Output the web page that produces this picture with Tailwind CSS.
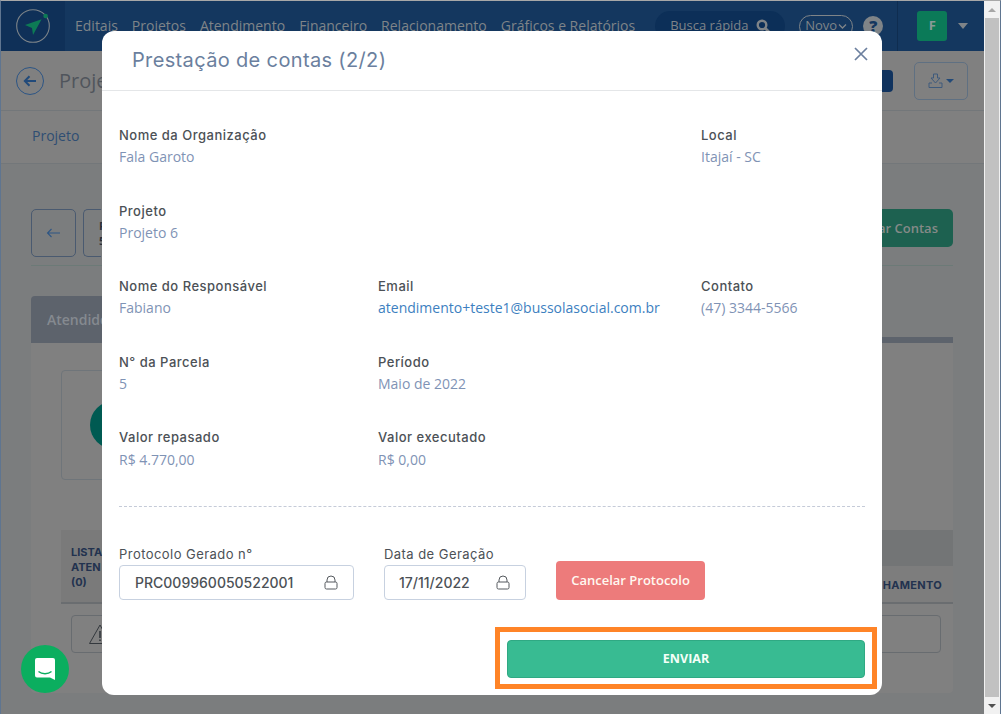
<!DOCTYPE html>
<html lang="pt-BR">
<head>
    <meta charset="UTF-8">
    <title>Prestação de contas</title>
    <script src="https://cdn.jsdelivr.net/npm/@tailwindcss/browser@4"></script>
</head>
<body class="bg-[#7b7d7e]">
<div class="relative w-[1001px] h-[714px] overflow-hidden bg-[#7b7d7e] font-['Open_Sans',sans-serif] border-t border-l border-r border-t-[#a8a8a8] border-l-[#5f7590] border-r-[#5f7590]">

    <!-- page behind the modal -->
    <div class="w-[983px] h-[713px] flex flex-col">
        <header class="h-[50px] shrink-0 bg-[#14375f] flex items-center text-[14px] text-[#7f8488]">
            <div class="w-[64px] h-[50px] bg-[#0f3058] flex items-center justify-center">
                <svg width="36" height="36" viewBox="0 0 36 36" fill="none">
                    <circle cx="18" cy="18" r="16.3" stroke="#7d8489" stroke-width="1.1"/>
                    <circle cx="30.6" cy="8" r="2.3" fill="#0d7a55"/>
                    <path d="M10 17 L26.6 11.3 L18 27 L17 20 Z" fill="#0d7a55"/>
                </svg>
            </div>
            <nav class="flex items-center gap-[14px] ml-[10px] pb-[1px]">
                <span>Editais</span><span>Projetos</span><span>Atendimento</span><span>Financeiro</span><span>Relacionamento</span><span>Gráficos e Relatórios</span>
            </nav>
            <div class="ml-[20px] w-[130px] h-[30px] rounded-full bg-[#0c2f58] flex items-center justify-between pl-[15px] pr-[14px] text-[13px]">
                <span>Busca rápida</span>
                <svg width="15" height="15" viewBox="0 0 15 15" fill="none"><circle cx="6" cy="6" r="4.3" stroke="#7f8488" stroke-width="2.4"/><path d="M9.5 9.5 L13.5 13.5" stroke="#7f8488" stroke-width="2.6"/></svg>
            </div>
            <div class="ml-[14px] w-[54px] h-[23px] rounded-full border border-[#7f8488] flex items-center justify-center gap-[1px] text-[13px]">
                <span>Novo</span>
                <svg width="9" height="7" viewBox="0 0 9 7" fill="none"><path d="M1 1.5 L4.5 5 L8 1.5" stroke="#7f8488" stroke-width="1.3"/></svg>
            </div>
            <div class="ml-[10px] w-[20px] h-[20px] rounded-full bg-[#7f8488] flex items-center justify-center text-[16px] font-extrabold text-[#14375f]">?</div>
            <div class="ml-[14px] h-[50px] border-l border-[#0f2d50] pl-[19px] flex items-center">
                <div class="w-[30px] h-[30px] rounded-[3px] bg-[#0b7a58] flex items-center justify-center text-[13px] font-bold text-[#8a9a98]">F</div>
                <div class="ml-[11px] w-0 h-0 border-x-[5.5px] border-x-transparent border-t-[6px] border-t-[#7f8488]"></div>
            </div>
        </header>
        <div class="h-[60px] shrink-0 bg-[#808080] border-b border-[#73777a] flex items-center pl-[15px] pr-[16px]">
            <div class="w-[28px] h-[28px] rounded-full border border-[#2c5585] flex items-center justify-center">
                <svg width="14" height="12" viewBox="0 0 14 12" fill="none"><path d="M13 6 H2 M6.5 1.2 L1.8 6 L6.5 10.8" stroke="#214a7a" stroke-width="2"/></svg>
            </div>
            <span class="ml-[15px] text-[20px] text-[#50555c]">Projeto</span>
            <div class="ml-auto w-[38px] h-[22px] rounded-[4px] bg-[#10335f]"></div>
            <div class="ml-[21px] w-[54px] h-[38px] rounded-[5px] border border-[#5f7082] flex items-center justify-center gap-[3px]">
                <svg width="15" height="16" viewBox="0 0 15 16" fill="none" stroke="#3e5a7c" stroke-width="1"><path d="M5.5 1 H9.5 V5 H12 L7.5 10 L3 5 H5.5 Z"/><path d="M1 10 H4 M11 10 H14 V14.5 H1 V10"/></svg>
                <div class="w-0 h-0 border-x-[4px] border-x-transparent border-t-[4px] border-t-[#234a78]"></div>
            </div>
        </div>
        <div class="h-[53px] shrink-0 bg-[#808080] border-b border-[#73777a] flex items-center pl-[31px] pb-[3px] text-[14px] text-[#2f4e73]">Projeto</div>
        <div class="flex-1 pl-[30px] pr-[31px] pt-[45px] bg-[#7b7d7e]">
            <div class="h-[57px] border-b border-[#6c7a77] flex items-start justify-between">
                <div class="flex gap-[7px]">
                    <div class="w-[45px] h-[48px] rounded-[5px] border border-[#4a5a70] flex items-center justify-center">
                        <svg width="15" height="10" viewBox="0 0 15 10" fill="none"><path d="M14 5 H1.5 M5.5 1 L1.5 5 L5.5 9" stroke="#2f5684" stroke-width="1.1"/></svg>
                    </div>
                    <div class="w-[18px] h-[48px] rounded-l-[5px] border border-r-0 border-[#4a5a70] pl-[15px] flex flex-col justify-center text-[11px] leading-[15px] font-bold text-[#2a2f38]">
                        <span>P</span><span>5</span>
                    </div>
                </div>
                <div class="w-[120px] h-[38px] rounded-[5px] bg-[#1d6150] flex items-center justify-end pr-[15px] pt-[1px] text-[13px] font-semibold text-[#858a88]">Prestar Contas</div>
            </div>
            <div class="mt-[30px] w-[922px] h-[397px]">
                <div class="h-[47px] flex items-end">
                    <div class="w-[100px] h-[47px] bg-[#5d636c] rounded-t-[4px] flex items-center pl-[16px] text-[14px] font-semibold text-[#858a90]">Atendidos</div>
                    <div class="flex-1 h-[6px] bg-[#5d636c]"></div>
                </div>
                <div class="h-[350px] bg-[#808080] rounded-b-[4px] pt-[27px]">
                    <div class="ml-[30px] w-[790px] h-[110px] rounded-[4px] border border-[#6f757a] flex items-center pl-[28px]">
                        <div class="w-[48px] h-[48px] rounded-full bg-[#005a52]"></div>
                    </div>
                    <div class="ml-[30px] mt-[50px] w-[892px] h-[74px] border-b-2 border-[#6a6d70] flex text-[11px] font-bold text-[#22324f] font-['Inter',sans-serif]">
                        <div class="w-[100px] bg-[#7a7a7a] pl-[10px] pt-[15px] leading-[15px]">LISTA<br>ATEN<br>(0)</div>
                        <div class="flex-1 flex flex-col">
                            <div class="h-[36px] bg-[#737576]"></div>
                            <div class="flex-1 bg-[#7d7d7d] flex items-center justify-end pr-[11px] pt-[2px] tracking-[0.3px]">HAMENTO</div>
                        </div>
                    </div>
                    <div class="ml-[40px] mt-[11px] w-[870px] h-[38px] rounded-[4px] border border-[#686c70] flex items-center pl-[16px]">
                        <svg width="24" height="22" viewBox="0 0 24 22" fill="none"><path d="M12 2 L22.5 20.5 H1.5 Z" stroke="#33383d" stroke-width="1"/><path d="M12 8 V15 M12 16.5 V18" stroke="#33383d" stroke-width="1.6"/></svg>
                    </div>
                </div>
            </div>
        </div>
    </div>

    <!-- scrollbar -->
    <div class="absolute top-0 right-0 w-[16px] h-[713px] bg-[#f1f1f1] flex flex-col items-center">
        <div class="h-[17px] flex items-center justify-center"><div class="w-0 h-0 border-x-[4px] border-x-transparent border-b-[4px] border-b-[#a6a6a6]"></div></div>
        <div class="w-[14px] flex-1 bg-[#c1c1c1]"></div>
        <div class="h-[17px] flex items-center justify-center"><div class="w-0 h-0 border-x-[4px] border-x-transparent border-t-[4px] border-t-[#505050]"></div></div>
    </div>

    <!-- chat bubble -->
    <div class="absolute left-[20px] top-[644px] w-[48px] h-[48px] rounded-full bg-[#0bae5f] flex items-center justify-center">
        <svg width="22" height="24" viewBox="0 0 22 24" fill="none">
            <path d="M3 1 H19 a2 2 0 0 1 2 2 V23 L16 20.5 H3 a2 2 0 0 1 -2 -2 V3 a2 2 0 0 1 2 -2 Z" fill="#ffffff"/>
            <path d="M4.5 14.5 C8 17.5 14 17.5 17.5 14.5" stroke="#0bae5f" stroke-width="1.4"/>
        </svg>
    </div>

    <!-- modal -->
    <div class="absolute left-[101px] top-[30px] w-[780px] h-[664px] bg-white rounded-[12px]">
        <div class="h-[60px] border-b border-[#e4e6e8] flex items-center justify-between pl-[30px] pr-[14px]">
            <h2 class="pb-[2px] text-[20px] text-[#6b7f9e] font-normal font-['Inter',sans-serif] tracking-[0.35px]">Prestação de contas (2/2)</h2>
            <svg class="mb-[14px]" width="14" height="14" viewBox="0 0 14 14" fill="none"><path d="M1 1 L13 13 M13 1 L1 13" stroke="#6b7f9e" stroke-width="1.7"/></svg>
        </div>
        <div class="pl-[17px] pr-[17px] pt-[34px]">
            <div class="grid grid-cols-[259px_323px_1fr] auto-rows-[75.5px] text-[14px] leading-[20px] text-[#7f93b5]">
                <div class="col-span-2">
                    <p class="text-[13px] font-medium tracking-[0.5px] text-[#4c5156] font-['Inter',sans-serif] mb-[2px]">Nome da Organização</p>
                    <p>Fala Garoto</p>
                </div>
                <div>
                    <p class="text-[13px] font-medium tracking-[0.5px] text-[#4c5156] font-['Inter',sans-serif] mb-[2px]">Local</p>
                    <p>Itajaí - SC</p>
                </div>
                <div class="col-span-3">
                    <p class="text-[13px] font-medium tracking-[0.5px] text-[#4c5156] font-['Inter',sans-serif] mb-[2px]">Projeto</p>
                    <p>Projeto 6</p>
                </div>
                <div>
                    <p class="text-[13px] font-medium tracking-[0.5px] text-[#4c5156] font-['Inter',sans-serif] mb-[2px]">Nome do Responsável</p>
                    <p>Fabiano</p>
                </div>
                <div>
                    <p class="text-[13px] font-medium tracking-[0.5px] text-[#4c5156] font-['Inter',sans-serif] mb-[2px]">Email</p>
                    <p class="text-[#3d7fbf]">atendimento+teste1@bussolasocial.com.br</p>
                </div>
                <div>
                    <p class="text-[13px] font-medium tracking-[0.5px] text-[#4c5156] font-['Inter',sans-serif] mb-[2px]">Contato</p>
                    <p>(47) 3344-5566</p>
                </div>
                <div>
                    <p class="text-[13px] font-medium tracking-[0.5px] text-[#4c5156] font-['Inter',sans-serif] mb-[2px]">N° da Parcela</p>
                    <p>5</p>
                </div>
                <div class="col-span-2">
                    <p class="text-[13px] font-medium tracking-[0.5px] text-[#4c5156] font-['Inter',sans-serif] mb-[2px]">Período</p>
                    <p>Maio de 2022</p>
                </div>
                <div>
                    <p class="text-[13px] font-medium tracking-[0.5px] text-[#4c5156] font-['Inter',sans-serif] mb-[3px]">Valor repasado</p>
                    <p>R$ 4.770,00</p>
                </div>
                <div class="col-span-2">
                    <p class="text-[13px] font-medium tracking-[0.5px] text-[#4c5156] font-['Inter',sans-serif] mb-[3px]">Valor executado</p>
                    <p>R$ 0,00</p>
                </div>
            </div>
            <div class="mt-[3px] border-t border-dashed border-[#c5cbd8]"></div>
            <div class="mt-[39px] flex items-end">
                <div class="w-[235px]">
                    <p class="text-[13px] font-normal tracking-[0.45px] leading-[16px] text-[#4c5156] font-['Inter',sans-serif] mb-[3px]">Protocolo Gerado n°</p>
                    <div class="h-[35px] rounded-[4px] border border-[#c7d1e0] flex items-center justify-between pl-[15px] pr-[15px] text-[14px] font-['Inter',sans-serif] font-medium text-[#4c5156]">
                        <span>PRC009960050522001</span>
                        <svg width="14" height="15" viewBox="0 0 14 15" fill="none" stroke="#55595e" stroke-width="1"><path d="M3 7 V5 a4 4 0 0 1 8 0 V7"/><rect x="1" y="7" width="12" height="7" rx="1.5"/></svg>
                    </div>
                </div>
                <div class="ml-[30px] w-[142px]">
                    <p class="text-[13px] font-normal tracking-[0.45px] leading-[16px] text-[#4c5156] font-['Inter',sans-serif] mb-[3px]">Data de Geração</p>
                    <div class="h-[35px] rounded-[4px] border border-[#c7d1e0] flex items-center justify-between pl-[14px] pr-[15px] text-[14px] font-['Inter',sans-serif] font-medium text-[#4c5156]">
                        <span>17/11/2022</span>
                        <svg width="14" height="15" viewBox="0 0 14 15" fill="none" stroke="#55595e" stroke-width="1"><path d="M3 7 V5 a4 4 0 0 1 8 0 V7"/><rect x="1" y="7" width="12" height="7" rx="1.5"/></svg>
                    </div>
                </div>
                <div class="ml-[30px] w-[149px] h-[39px] rounded-[4px] bg-[#ed7b7b] flex items-center justify-center pt-[1px] text-[13px] font-semibold text-[#fff8f0]">Cancelar Protocolo</div>
            </div>
        </div>
        <div class="absolute left-[393px] top-[596px] w-[382px] h-[62px] border-[5px] border-[#ff8427] pt-[2px] flex items-center justify-center">
            <div class="w-[358px] h-[38px] rounded-[4px] bg-[#38bb92] border border-[#2fa983] flex items-center justify-center pt-[1px] text-[12.5px] font-bold text-[#f4fff8]">ENVIAR</div>
        </div>
    </div>
</div>
</body>
</html>
